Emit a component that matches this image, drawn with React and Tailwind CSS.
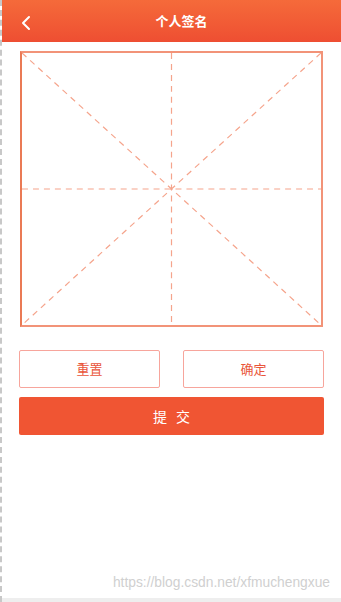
import React from "react";

function Grid() {
  return (
    <svg className="absolute inset-0 h-full w-full" viewBox="0 0 300 273" preserveAspectRatio="none">
      <g stroke="#f5a48c" strokeWidth="1.2" strokeDasharray="6 5" fill="none">
        <line x1="150" y1="0" x2="150" y2="273" />
        <line x1="0" y1="136.5" x2="300" y2="136.5" />
        <line x1="0" y1="0" x2="300" y2="273" />
        <line x1="300" y1="0" x2="0" y2="273" />
      </g>
    </svg>
  );
}

export default function App() {
  return (
    <div
      className="relative h-[602px] w-[341px] overflow-hidden bg-white border-l-2 border-dashed border-[#c8c8c8]"
      style={{ fontFamily: '"Noto Sans CJK SC", "Liberation Sans", sans-serif' }}
    >
      <div className="relative flex h-[42px] items-center justify-center pl-[20px] bg-gradient-to-b from-[#f56a3a] to-[#ee4e32]">
        <button className="absolute left-[14px] top-[11px] p-1">
          <svg width="12" height="16" viewBox="0 0 12 16" fill="none">
            <path d="M9 2 L3 8 L9 14" stroke="#fff" strokeWidth="2" strokeLinecap="round" strokeLinejoin="round" />
          </svg>
        </button>
        <span className="text-[13px] font-bold text-white">个人签名</span>
      </div>

      <div className="px-[17px] pt-[9px]">
        <div className="relative ml-[1px] h-[276px] w-[303px] border-2 border-[#f29378] border-l-[#ea7a55]">
          <Grid />
        </div>

        <div className="mt-[23px] flex justify-between">
          <button className="h-[38px] w-[141px] rounded-[2px] border border-[#f7a59c] text-[13px] text-[#e9553a]">
            重置
          </button>
          <button className="h-[38px] w-[141px] rounded-[2px] border border-[#f7a59c] text-[13px] text-[#e9553a]">
            确定
          </button>
        </div>

        <button className="mt-[9px] h-[38px] w-[305px] rounded-[2px] bg-[#f05533] pl-[3px] text-[14px] tracking-[3px] text-white">
          提 交
        </button>
      </div>

      <div className="absolute bottom-[8px] right-[11px] text-[13.8px] text-[#d0d0d0]" style={{ fontFamily: '"Liberation Sans", sans-serif' }}>
        https://blog.csdn.net/xfmuchengxue
      </div>
      <div className="absolute bottom-0 left-0 right-0 h-[4px] bg-[#eeeeee]" />
    </div>
  );
}
